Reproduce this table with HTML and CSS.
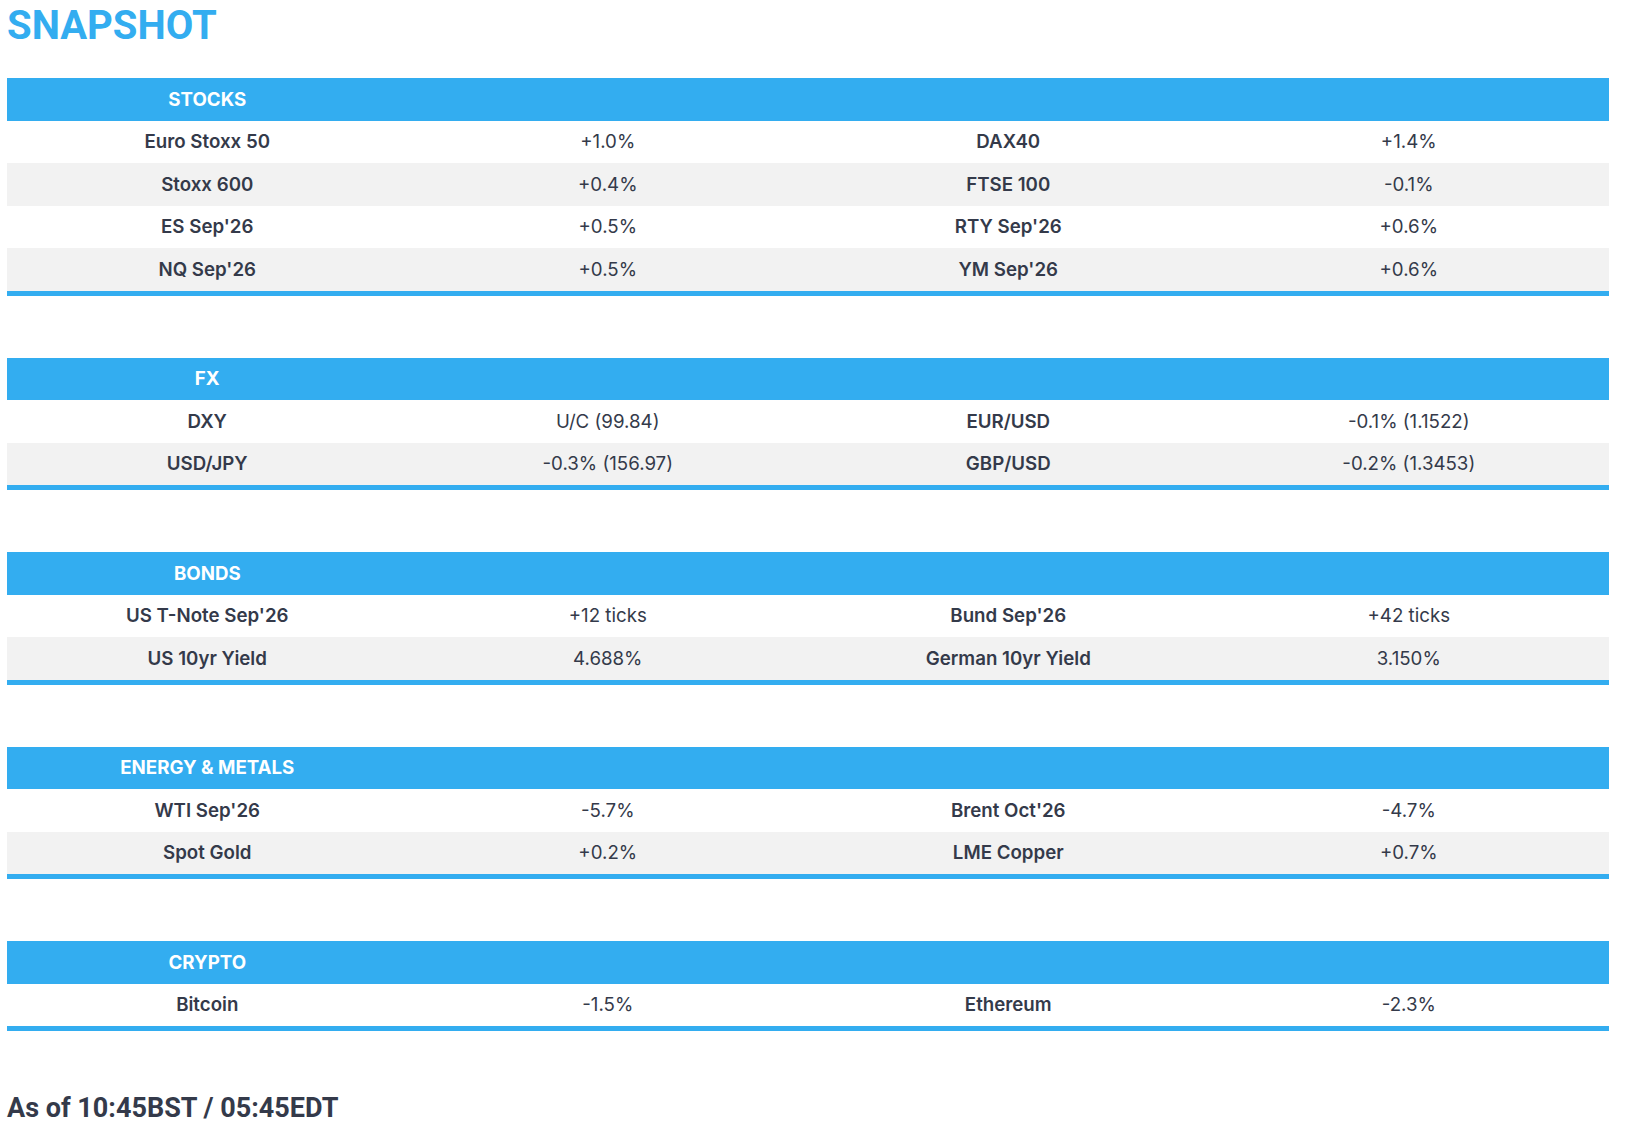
FILE: index.html
```html
<!DOCTYPE html>
<html lang="en">
<head>
<meta charset="utf-8">
<title>Snapshot</title>
<link rel="stylesheet" href="styles.css">
</head>
<body>
<div class="page">
  <h1 class="title">SNAPSHOT</h1>

  <table class="snap">
    <thead><tr><th>STOCKS</th><th></th><th></th><th></th></tr></thead>
    <tbody>
      <tr><td class="lbl">Euro Stoxx 50</td><td>+1.0%</td><td class="lbl">DAX40</td><td>+1.4%</td></tr>
      <tr><td class="lbl">Stoxx 600</td><td>+0.4%</td><td class="lbl">FTSE 100</td><td>-0.1%</td></tr>
      <tr><td class="lbl">ES Sep'26</td><td>+0.5%</td><td class="lbl">RTY Sep'26</td><td>+0.6%</td></tr>
      <tr><td class="lbl">NQ Sep'26</td><td>+0.5%</td><td class="lbl">YM Sep'26</td><td>+0.6%</td></tr>
    </tbody>
  </table>

  <table class="snap">
    <thead><tr><th>FX</th><th></th><th></th><th></th></tr></thead>
    <tbody>
      <tr><td class="lbl">DXY</td><td>U/C (99.84)</td><td class="lbl">EUR/USD</td><td>-0.1% (1.1522)</td></tr>
      <tr><td class="lbl">USD/JPY</td><td>-0.3% (156.97)</td><td class="lbl">GBP/USD</td><td>-0.2% (1.3453)</td></tr>
    </tbody>
  </table>

  <table class="snap">
    <thead><tr><th>BONDS</th><th></th><th></th><th></th></tr></thead>
    <tbody>
      <tr><td class="lbl">US T-Note Sep'26</td><td>+12 ticks</td><td class="lbl">Bund Sep'26</td><td>+42 ticks</td></tr>
      <tr><td class="lbl">US 10yr Yield</td><td>4.688%</td><td class="lbl">German 10yr Yield</td><td>3.150%</td></tr>
    </tbody>
  </table>

  <table class="snap">
    <thead><tr><th>ENERGY &amp; METALS</th><th></th><th></th><th></th></tr></thead>
    <tbody>
      <tr><td class="lbl">WTI Sep'26</td><td>-5.7%</td><td class="lbl">Brent Oct'26</td><td>-4.7%</td></tr>
      <tr><td class="lbl">Spot Gold</td><td>+0.2%</td><td class="lbl">LME Copper</td><td>+0.7%</td></tr>
    </tbody>
  </table>

  <table class="snap">
    <thead><tr><th>CRYPTO</th><th></th><th></th><th></th></tr></thead>
    <tbody>
      <tr><td class="lbl">Bitcoin</td><td>-1.5%</td><td class="lbl">Ethereum</td><td>-2.3%</td></tr>
    </tbody>
  </table>

  <p class="asof">As of 10:45BST / 05:45EDT</p>
</div>
</body>
</html>
```
FILE: styles.css
```css
html, body {
  margin: 0;
  padding: 0;
  background: #ffffff;
}

.page {
  padding: 2px 16px 0 7px;
  font-family: Inter, "Liberation Sans", sans-serif;
  color: #343a4a;
}

.title {
  margin: 0 0 28px 0;
  font-family: Roboto, "Liberation Sans", sans-serif;
  font-weight: 700;
  font-size: 40px;
  line-height: 48px;
  color: #33adf0;
}

.snap {
  width: 1602px;
  table-layout: fixed;
  border-collapse: collapse;
  margin: 0 0 62px 0;
}

.snap th {
  background: #33adf0;
  color: #ffffff;
  font-family: Inter, "Liberation Sans", sans-serif;
  font-weight: 700;
  font-size: 18.7px;
  height: 42.5px;
  padding: 0;
  text-align: center;
  vertical-align: middle;
}

.snap td {
  height: 42.5px;
  padding: 0;
  text-align: center;
  vertical-align: middle;
  font-size: 18.7px;
  font-weight: 400;
  color: #343a4a;
}

.snap td.lbl {
  font-weight: 600;
}

.snap tbody tr:nth-child(even) td {
  background: #f2f2f2;
}

.snap tbody tr:last-child td {
  border-bottom: 5px solid #33adf0;
}

.asof {
  margin: 0;
  font-family: Roboto, "Liberation Sans", sans-serif;
  font-size: 27px;
  font-weight: 700;
  line-height: 31px;
  color: #343a4a;
}
```
